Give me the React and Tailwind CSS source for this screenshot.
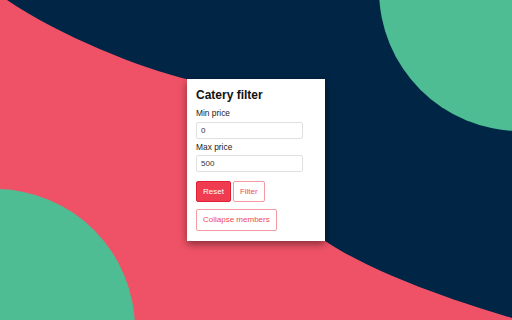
export default function App() {
  return (
    <div className="relative w-[512px] h-[320px] overflow-hidden bg-[#ef5266] flex items-center justify-center font-['Liberation_Sans',Arial,sans-serif]">
      <svg className="absolute inset-0" width="512" height="320" viewBox="0 0 512 320">
        <path
          d="M7,0 C60,36 140,68 190,80 L324,240 C345,255 400,285 512,318 L512,0 Z"
          fill="#012545"
        />
        <circle cx="520" cy="-10" r="141" fill="#4ebd93" />
        <circle cx="-5" cy="329" r="140" fill="#4ebd93" />
      </svg>

      <div className="relative w-[138px] bg-white px-[9px] pt-[8px] pb-[10px] shadow-[0_3px_8px_rgba(0,0,0,0.45)]">
        <h1 className="text-[12px] leading-[16px] font-bold text-[#111]">Catery filter</h1>

        <label className="block mt-[5px] mb-[3px] text-[8.4px] leading-[11px] text-[#222]">Min price</label>
        <input
          defaultValue="0"
          className="block w-[107px] h-[17px] px-[4px] border border-[#e0e0e0] rounded-[2px] text-[8px] text-[#333] outline-none"
        />

        <label className="block mt-[3px] mb-[2px] text-[8.4px] leading-[11px] text-[#222]">Max price</label>
        <input
          defaultValue="500"
          className="block w-[107px] h-[17px] px-[4px] border border-[#e0e0e0] rounded-[2px] text-[8px] text-[#333] outline-none"
        />

        <div className="flex gap-[2px] mt-[9px]">
          <button className="h-[21px] px-[6px] bg-[#ef3c50] border border-[#e01f33] rounded-[2px] text-[8px] text-white">
            Reset
          </button>
          <button className="h-[21px] px-[6px] bg-white border border-[#f39aa3] rounded-[2px] text-[8px] text-[#ee4a5c]">
            Filter
          </button>
        </div>

        <button className="block mt-[7px] h-[22px] px-[6px] bg-white border border-[#f39aa3] rounded-[2px] text-[8px] text-[#ee4a5c]">
          Collapse members
        </button>
      </div>
    </div>
  );
}
